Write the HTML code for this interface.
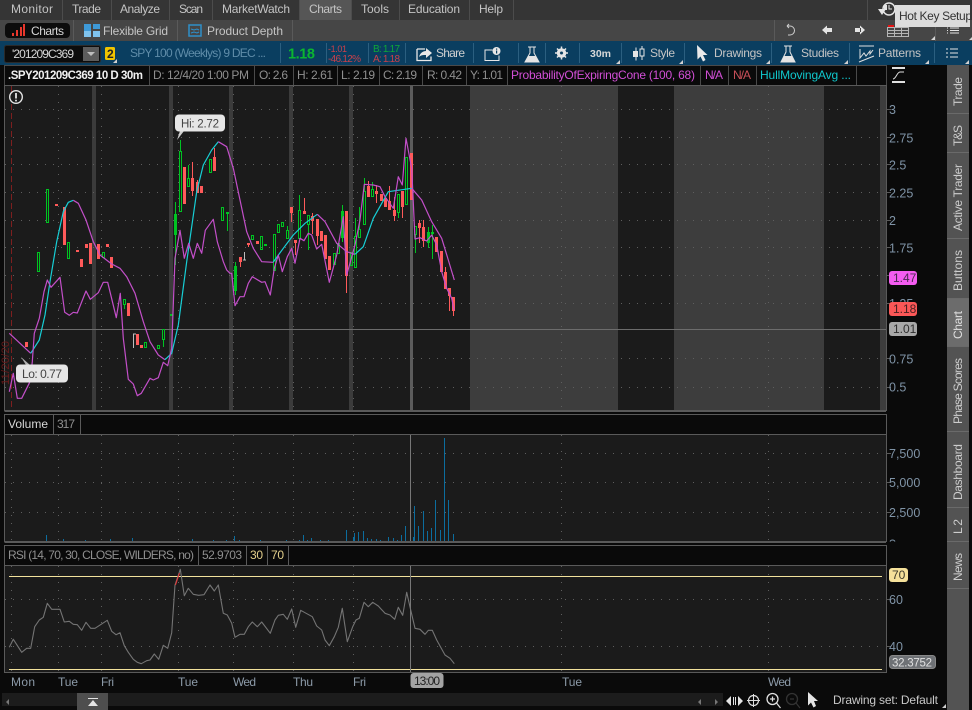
<!DOCTYPE html>
<html><head><meta charset="utf-8"><style>
html,body{margin:0;padding:0;background:#0a0a0a;width:972px;height:710px;overflow:hidden}
svg{display:block}
text{font-family:"Liberation Sans",sans-serif;font-size:12px;fill:#c4c4c4}
.g rect{fill:none;stroke:#00c322;stroke-width:1}
.g path{stroke:#00c322;stroke-width:1;fill:none}
.r rect{fill:#ff5a5a}
.r path{stroke:#ff5a5a;stroke-width:1;fill:none}
.hd{stroke:#5a5a5a;stroke-width:1;fill:none}
.dot{stroke:#5e5e5e;stroke-width:1;stroke-dasharray:1 7;fill:none}
.dk{stroke:#2b5f80;stroke-width:1}
.ax{fill:#7f93a6;font-size:12.500px}
</style></head><body>
<svg width="972" height="710" viewBox="0 0 972 710" xmlns="http://www.w3.org/2000/svg">
<rect width="972" height="710" fill="#0a0a0a"/>
<!-- menu -->
<rect width="972" height="20" fill="#353535"/>
<rect x="300" width="51" height="20" fill="#565656"/>
<path d="M62.500 0v20M111.500 0v20M169.500 0v20M212.500 0v20M299.500 0v20M351.500 0v20M399.500 0v20M469.500 0v20M513.500 0v20M867.500 0v20" stroke="#4c4c4c"/>
<text x="11" y="13" textLength="42">Monitor</text>
<text x="72" y="13" textLength="29">Trade</text>
<text x="120" y="13" textLength="40">Analyze</text>
<text x="179" y="13" textLength="24">Scan</text>
<text x="222" y="13" textLength="68">MarketWatch</text>
<text x="309" y="13" textLength="33">Charts</text>
<text x="361" y="13" textLength="28">Tools</text>
<text x="408" y="13" textLength="52">Education</text>
<text x="479" y="13" textLength="24">Help</text>
<!-- row2 -->
<rect y="20" width="972" height="21" fill="#464646"/>
<rect x="5" y="23" width="65" height="15" rx="4" fill="#0c0c0c"/>
<path d="M13 36v-3M17 36v-6M21 36v-9M24 36v-12" stroke="#e8372c" stroke-width="2"/>
<text x="31" y="35" textLength="33" style="fill:#d8d8d8">Charts</text>
<path d="M73.500 20v21M177.500 20v21M292.500 20v21M774.500 20v21M935.500 20v21" stroke="#5a5a5a"/>
<rect x="84" y="24" width="7" height="11" fill="#3e9ad8"/><rect x="93" y="24" width="7" height="5" fill="#3e9ad8"/><rect x="84" y="31" width="7" height="6" fill="#7fc3ee"/><rect x="93" y="31" width="7" height="6" fill="#7fc3ee"/>
<text x="103" y="35" textLength="65">Flexible Grid</text>
<rect x="189" y="25" width="12" height="11" fill="none" stroke="#2f8fc9" stroke-width="1.500"/><path d="M191 29l3 1 3-1 2 1M191 33l3-1 3 1 2-1" stroke="#2f8fc9" fill="none"/>
<text x="207" y="35" textLength="76">Product Depth</text>
<path d="M787 26h3a4.500 4.500 0 1 1 0 9h-2M787 26l2-2M787 26l2 2" stroke="#cfcfcf" fill="none"/>
<path d="M826 28h6v4h-6zM827 25.500v9l-5-4.500z" fill="#e4e4e4"/>
<path d="M855 28h6v4h-6zM860 25.500v9l5-4.500z" fill="#e4e4e4"/>
<path d="M887.500 27.500h21v9h-21zM887.500 30.500h21M887.500 33.500h21M894.500 27.500v9M901.500 27.500v9" stroke="#b5b5b5" fill="none"/>
<rect x="888" y="25" width="6" height="2" fill="#e81313"/>
<path d="M948 28h-1M948 30.500h-1M948 33h-1M950 28h9M950 30.500h9M950 33h9" stroke="#e4e4e4"/>
<path d="M931 40l4-4v4zM969 40l3-3v3z" fill="#d5d5d5"/>
<!-- row3 -->
<rect y="41" width="972" height="24" fill="#0a3e60"/>
<rect x="4.500" y="45.500" width="96" height="17" rx="2" fill="#0c0c0c" stroke="#2a2a2a"/>
<text x="12" y="58" textLength="62" style="fill:#d6d6d6">'201209C369</text>
<rect x="83" y="47" width="16" height="14" fill="#5c5c5c"/><path d="M87 52h8l-4 4z" fill="#bdbdbd"/>
<rect x="105" y="47" width="10" height="13" rx="1.500" fill="#f0c400"/><text x="107" y="58" style="font-size:12px;font-weight:bold;fill:#222">2</text>
<path d="M113 63l4-4v4z" fill="#d0d0d0"/>
<text x="130" y="57" textLength="136" style="fill:#5f8ca8">SPY 100 (Weeklys) 9 DEC ...</text>
<path d="M280.500 43v20M326.500 43v20M368.500 43v20M405.500 43v20M473.500 43v20M518.500 43v20M545.500 43v20M579.500 43v20M621.500 43v20M684.500 43v20M771.500 43v20M849.500 43v20M934.500 43v20" class="dk"/>
<text x="288" y="58.500" textLength="27" style="font-size:14.500px;font-weight:bold;fill:#0bb530">1.18</text>
<text x="328" y="52" textLength="19" style="font-size:9px;fill:#c9414b">-1.01</text>
<text x="328" y="62" textLength="33" style="font-size:10px;fill:#c9414b">-46.12%</text>
<text x="373" y="52" textLength="27" style="font-size:10px;fill:#0fa838">B: 1.17</text>
<text x="373" y="62" textLength="27" style="font-size:10px;fill:#c9414b">A: 1.18</text>
<path d="M417 49v11.500h14v-4M425 49h-8" stroke="#e8e8e8" fill="none" stroke-width="1.300"/>
<path d="M419 57c1-4 4-6 7-6v-3l6 5-6 5v-3c-3 0-5 0-7 2z" fill="#e8e8e8"/>
<text x="436" y="57" textLength="29" style="fill:#d0d0d0">Share</text>
<path d="M484.500 50h8M485 50.500v10h14v-5" stroke="#e6e6e6" fill="none"/><circle cx="496.500" cy="51" r="4" fill="#e6e6e6"/><rect x="496" y="48.500" width="1.200" height="1.200" fill="#0a3e60"/><rect x="496" y="50.500" width="1.200" height="3" fill="#0a3e60"/>
<path d="M528 47h8M530 47v6l-5 9h14l-5-9v-6" stroke="#e4e4e4" fill="none"/><path d="M528 56h8l3 6h-14z" fill="#e4e4e4"/>
<circle cx="561.500" cy="53" r="3.500" fill="none" stroke="#e6e6e6" stroke-width="2.500"/><path d="M561.500 46.500v13M555 53h13M557 48.500l9 9M566 48.500l-9 9" stroke="#e6e6e6" stroke-width="1.500"/><circle cx="561.500" cy="53" r="1.500" fill="#0a3e60"/>
<text x="590" y="57" textLength="21" style="font-weight:bold;font-size:10.500px;fill:#d8d8d8">30m</text>
<path d="M636 47.500v13" stroke="#e6e6e6"/><rect x="633" y="51" width="5" height="6" fill="#e6e6e6"/><path d="M642 46v14" stroke="#e6e6e6"/><rect x="640" y="49" width="4" height="7" fill="#0a3e60" stroke="#e6e6e6"/>
<text x="650" y="57" textLength="25">Style</text>
<path d="M697 45l10.500 10h-4.500l2.500 5-2.500 1.500-2.500-5-3 3z" fill="#eaeaea"/>
<text x="714" y="57" textLength="48">Drawings</text>
<path d="M784 46h8M786 46v6l-5 10h14l-5-10v-6" stroke="#e4e4e4" fill="none"/><path d="M784 56h8l3 6h-14z" fill="#e4e4e4"/>
<text x="801" y="57" textLength="38">Studies</text>
<path d="M859 46h15M859 62l15-6M860 49v9l4-5 2 3 4-5v3l3-4" stroke="#e0e0e0" fill="none"/>
<text x="878" y="57" textLength="43">Patterns</text>
<path d="M946 49h2M946 53h2M946 57h2M950 49h8M950 53h8M950 57h8" stroke="#e4e4e4"/>
<path d="M616 64l4-4v4zM679 64l4-4v4zM766 64l4-4v4zM844 64l4-4v4zM925 64l4-4v4zM965 64l4-4v4z" fill="#d0d0d0"/>
<!-- row4 -->
<rect y="65" width="972" height="20" fill="#0a0a0a"/>
<path d="M4.500 65.500H886.500M149.500 65v20M254.500 65v20M293.500 65v20M337.500 65v20M379.500 65v20M422.500 65v20M466.500 65v20M507.500 65v20M700.500 65v20M728.500 65v20M756.500 65v20M856.500 65v20M886.500 65v20M4.500 65v20" stroke="#4a4a4a"/>
<text x="8" y="79" textLength="135" style="font-weight:bold;fill:#f0f0f0;font-size:11.500px">.SPY201209C369 10 D 30m</text>
<text x="153" y="79" textLength="96" style="fill:#8f8f8f">D: 12/4/20 1:00 PM</text>
<text x="259" y="79" textLength="29" style="fill:#8f8f8f">O: 2.6</text>
<text x="297" y="79" textLength="36" style="fill:#8f8f8f">H: 2.61</text>
<text x="341" y="79" textLength="34" style="fill:#8f8f8f">L: 2.19</text>
<text x="383" y="79" textLength="34" style="fill:#8f8f8f">C: 2.19</text>
<text x="427" y="79" textLength="35" style="fill:#8f8f8f">R: 0.42</text>
<text x="470" y="79" textLength="33" style="fill:#8f8f8f">Y: 1.01</text>
<text x="511" y="79" textLength="184" style="fill:#d24fd6">ProbabilityOfExpiringCone (100, 68)</text>
<text x="705" y="79" textLength="18" style="fill:#d24fd6">N/A</text>
<text x="733" y="79" textLength="18" style="fill:#c9505a">N/A</text>
<text x="760" y="79" textLength="91" style="fill:#10c7cc">HullMovingAvg ...</text>
<path d="M892 68h13M892 82h13" stroke="#e0e0e0" stroke-width="2"/><path d="M893 79c3 0 4-7 7-7h4" stroke="#e0e0e0" fill="none"/>
<!-- main panel -->
<rect x="4.500" y="85.500" width="882" height="325" fill="#1b1b1b" stroke="#5a5a5a"/>
<rect x="470" y="86" width="148" height="324" fill="#3d3d3d"/>
<rect x="674" y="86" width="150" height="324" fill="#3d3d3d"/>
<rect x="880" y="86" width="6" height="324" fill="#3d3d3d"/>
<g fill="#3b3b3b"><rect x="92" y="86" width="4" height="324"/><rect x="169" y="86" width="4" height="324"/><rect x="229" y="86" width="4" height="324"/><rect x="289" y="86" width="4" height="324"/><rect x="349" y="86" width="4" height="324"/></g>
<rect x="410" y="86" width="3" height="324" fill="#5c5c5c"/>
<path class="dot" d="M5 109.500H880M5 137.500H880M5 164.500H880M5 192.500H880M5 220.500H880M5 247.500H880M5 275.500H880M5 303.500H880M5 358.500H880M5 387.500H880"/>
<path class="dot" d="M58.500 86V410M101.500 86V410M178.500 86V410M233.500 86V410M293.500 86V410M353.500 86V410M561.500 86V410M768.500 86V410"/>
<path d="M11.500 86V410" stroke="#7d1f1f" stroke-dasharray="6 3"/>
<text x="9" y="385" transform="rotate(-90 9 385)" style="font-size:11px;fill:#6b1a1a" textLength="44">11/20/20</text>
<path d="M5 329.500H886" stroke="#6c6c6c"/>
<!-- candles -->
<g shape-rendering="crispEdges">
<g class="g">
<rect x="46.500" y="189.500" width="2" height="33"/><rect x="37.500" y="252.500" width="2" height="19"/><rect x="67.500" y="242.500" width="2" height="16"/><rect x="102.500" y="252.500" width="2" height="5"/><rect x="123.500" y="299.500" width="2" height="5"/><path d="M124.500 305v4"/>
<rect x="144.500" y="342.500" width="2" height="5"/><rect x="157.500" y="345.500" width="2" height="3"/><rect x="162.500" y="329.500" width="2" height="10"/><path d="M163.500 340v7"/>
<rect x="170" y="314" width="3" height="2" style="fill:#00c322;stroke:none"/>
<rect x="174.500" y="214.500" width="2" height="20"/><path d="M175.500 202v63"/>
<rect x="179.500" y="151.500" width="2" height="60"/><path d="M180.500 140v11"/>
<rect x="187.500" y="178.500" width="2" height="8"/><path d="M188.500 165v13"/>
<rect x="209.500" y="159.500" width="2" height="13"/><rect x="221.500" y="207.500" width="2" height="13"/>
<rect x="226" y="212" width="3" height="2" style="fill:#00c322;stroke:none"/><path d="M227.500 214v17"/>
<rect x="234.500" y="266.500" width="2" height="24"/><path d="M235.500 262v33"/>
<rect x="251.500" y="235.500" width="2" height="4"/><rect x="260.500" y="236.500" width="2" height="13"/>
<rect x="264" y="244" width="3" height="2" style="fill:#00c322;stroke:none"/>
<rect x="273.500" y="234.500" width="2" height="36"/><rect x="277.500" y="224.500" width="2" height="8"/><rect x="281.500" y="222.500" width="2" height="4"/>
<rect x="286.500" y="230.500" width="2" height="8"/><path d="M287.500 226v4"/>
<rect x="298.500" y="210.500" width="2" height="28"/><path d="M299.500 195v15"/>
<rect x="307.500" y="215.500" width="2" height="9"/><path d="M308.500 224v26"/>
<rect x="333.500" y="253.500" width="2" height="11"/><rect x="337.500" y="243.500" width="2" height="10"/>
<rect x="341.500" y="211.500" width="2" height="26"/><path d="M342.500 205v37"/>
<rect x="350.500" y="252.500" width="2" height="13"/><rect x="354.500" y="236.500" width="2" height="31"/><path d="M355.500 218v18"/>
<rect x="358.500" y="229.500" width="2" height="8"/><path d="M359.500 207v22"/>
<rect x="363.500" y="191.500" width="2" height="33"/><path d="M364.500 178v13"/>
<rect x="371.500" y="189.500" width="2" height="7"/><path d="M372.500 182v7"/>
<rect x="397.500" y="194.500" width="2" height="18"/><path d="M398.500 212v6"/>
<rect x="405.500" y="157.500" width="2" height="47"/>
<rect x="414.500" y="226.500" width="2" height="8"/><path d="M415.500 234v19"/>
<rect x="427.500" y="232.500" width="2" height="10"/><path d="M428.500 227v21"/>
<rect x="431" y="232" width="3" height="2" style="fill:#00c322;stroke:none"/><path d="M432.500 225v34"/>
</g>
<g class="r">
<rect x="25" y="342" width="3" height="5"/><rect x="55" y="204" width="3" height="2"/><rect x="63" y="207" width="3" height="38"/><rect x="76" y="250" width="3" height="2"/><rect x="80" y="259" width="3" height="8"/><rect x="85" y="244" width="3" height="4"/><rect x="89" y="243" width="3" height="21"/><rect x="97" y="244" width="3" height="15"/><rect x="106" y="244" width="3" height="3"/><rect x="110" y="257" width="3" height="11"/><rect x="127" y="303" width="3" height="13"/><rect x="136" y="334" width="3" height="11"/><rect x="140" y="345" width="3" height="3"/>
<rect x="183" y="167" width="3" height="37"/><rect x="191" y="178" width="3" height="13"/><path d="M192.500 162v34"/><rect x="196" y="182" width="3" height="11"/><path d="M197.500 180v3"/><rect x="200" y="186" width="3" height="7"/><rect x="213" y="157" width="3" height="14"/><path d="M214.500 148v9"/>
<rect x="239" y="257" width="3" height="5"/><path d="M240.500 262v5"/><rect x="247" y="243" width="3" height="2"/><path d="M248.500 245v2"/><rect x="256" y="241" width="3" height="3"/>
<rect x="290" y="207" width="3" height="6"/><path d="M291.500 213v9"/><rect x="294" y="240" width="3" height="3"/><path d="M295.500 243v12"/><rect x="303" y="211" width="3" height="3"/><path d="M304.500 198v13"/><rect x="311" y="216" width="3" height="5"/><path d="M312.500 213v21"/><rect x="316" y="219" width="3" height="17"/><path d="M317.500 236v9"/><rect x="320" y="231" width="3" height="10"/><rect x="324" y="235" width="3" height="24"/><rect x="328" y="256" width="3" height="14"/>
<rect x="345" y="211" width="3" height="65"/><path d="M346.500 276v17"/><rect x="367" y="186" width="3" height="11"/><path d="M368.500 181v5"/><rect x="375" y="191" width="3" height="3"/><path d="M376.500 185v18"/><rect x="380" y="194" width="3" height="7"/><rect x="384" y="198" width="3" height="9"/><rect x="388" y="201" width="3" height="9"/><path d="M389.500 186v15"/><rect x="393" y="210" width="3" height="6"/><path d="M394.500 197v24"/><rect x="401" y="191" width="3" height="16"/><path d="M402.500 207v11"/><rect x="410" y="153" width="3" height="47"/>
<rect x="418" y="223" width="3" height="5"/><path d="M419.500 220v23"/><rect x="422" y="227" width="3" height="14"/><path d="M423.500 220v27"/><rect x="435" y="237" width="3" height="15"/><rect x="440" y="251" width="3" height="21"/><rect x="444" y="272" width="3" height="17"/><path d="M445.500 267v5"/><rect x="448" y="288" width="3" height="8"/><path d="M449.500 296v15"/><rect x="452" y="297" width="3" height="14"/><path d="M453.500 311v5"/>
</g>
<path d="M133.500 334v14M244.500 252v8" stroke="#bdbdbd"/>
<path d="M133 334h3M243 260h3" stroke="#bdbdbd"/>
</g>
<!-- lines -->
<g fill="none" stroke-width="1.200" stroke-linejoin="round">
<path stroke="#c34fc9" d="M9.300 333.300L20 343.300L30.700 353.300"/>
<path stroke="#17cfd6" d="M30.700 353.300L39.300 340L45 315L50 281.700L56.700 241.700L63.300 211.700L68.300 202.300L73.300 200.300"/>
<path stroke="#c34fc9" d="M73.300 200.300L78.300 203.300L86 220L93.300 241.700L100 255L111.700 264L120 268.300L126.700 276.700L135 293.300L143.300 321.700L150 341.700L158.300 355L165 359.700"/>
<path stroke="#17cfd6" d="M165 359.700L171.700 353.300L178.300 325L186.700 261.700L196.700 191.700L203.300 165L211.700 150L218.300 141.700"/>
<path stroke="#c34fc9" d="M218.300 141.700L226.700 146.700L233.300 168.300L240 200L246.700 231.700L253.300 248.300L261.700 261.700L273.300 262.300"/>
<path stroke="#17cfd6" d="M273.300 262L283.300 248.300L293.300 235L305 223.300L317.300 214.300"/>
<path stroke="#c34fc9" d="M317.300 214.300L325 221.700L336.700 243.300L346.700 251.700L355 254.300"/>
<path stroke="#17cfd6" d="M355 254.300L363.300 246.700L373.300 218.300L388.300 191.700L411.700 188.300"/>
<path stroke="#c34fc9" d="M411.700 188.300L421.700 200L431.700 221.700L441.700 238.300L448.300 260L454.300 280"/>
<path stroke="#c34fc9" d="M9.300 391.700L13.300 373.300L17.300 398.300L21.700 398.300L30 381.700L32.300 361.700L34.300 333.300L39.300 318.300L44 291.700L47.300 280L51 287.300L60 277.300L64.700 312.300L69.300 315.300L73.300 312.300L77.300 313L86 291L90.300 299.300L98.300 292.700L103.300 282.300L107.700 282.300L116.300 317.700L120.300 293.300L123.300 338.300L128.300 379.300L133.300 384L137.300 395.700L141.300 393.300L150 378.300L153.300 380L158.300 377.700L163.300 362.300L167.700 365.700L171.700 348.300L175 258.300L180 230.300L184.300 258.300L188.700 243.300L193.300 258.300L197.300 243.300L201.700 253.300L205.300 230.300L213.300 219.300L217.300 241.700L223.300 261.700L226.700 270L230 273.300L231.700 273.300L235 305.700L240 296.700L244 296.700L248.300 283.300L252.300 276.700L261.700 282.300L265 281.700L270.300 295L274.300 268.300L278.300 255L282.300 271.700L287.300 256.700L291.700 248.300L295 263.300L300 238.300L304 240.700L308.300 233.300L311.700 235L316.700 249L321.700 244.300L329.300 282.300L336.700 255L343.300 216.700L346.700 275L355 245L360 220L364.300 184.300L373.300 185L380 186.700L385 196.700L393.300 208.300L398.300 176.700L402.300 185L406 138.300L411.700 168.300L415 239L420 237.700L426.700 241L431.700 235L436.700 245L441.700 271.700L446.700 288.300L451.700 298.300L454 310"/>
</g>
<!-- bubbles -->
<path d="M180 131l-3 9 7-9z" fill="#cfcfcf"/>
<rect x="175" y="114.500" width="50" height="17" rx="4" fill="#e6e6e6"/>
<text x="181" y="127.500" textLength="38" style="fill:#444;font-size:11.500px">Hi: 2.72</text>
<path d="M21 357l5 8h4z" fill="#b0b0b0"/>
<rect x="16" y="364.500" width="52" height="18" rx="4" fill="#e6e6e6"/>
<text x="22" y="378" textLength="40" style="fill:#444">Lo: 0.77</text>
<circle cx="16" cy="97" r="6.300" fill="#1b1b1b" stroke="#e4e4e4" stroke-width="1.400"/><path d="M16 93v5.500M16 99.800v1.600" stroke="#e4e4e4" stroke-width="1.800"/>
<!-- price axis -->
<path d="M886 109.500h5M886 137.500h5M886 164.500h5M886 192.500h5M886 220.500h5M886 247.500h5M886 275.500h5M886 303.500h5M886 358.500h5M886 387.500h5" stroke="#5a5a5a"/>
<text class="ax" x="889" y="114">3</text><text class="ax" x="889" y="142.500">2.75</text><text class="ax" x="889" y="169.500">2.5</text><text class="ax" x="889" y="197.500">2.25</text><text class="ax" x="889" y="225">2</text><text class="ax" x="889" y="252.500">1.75</text><text class="ax" x="889" y="308">1.25</text><text class="ax" x="889" y="363.500">0.75</text><text class="ax" x="889" y="391.500">0.5</text>
<rect x="889" y="271" width="28" height="14" rx="3" fill="#f45cf0"/><text x="893" y="282" style="font-size:12px;fill:#4a2a50">1.47</text>
<rect x="889" y="302" width="28" height="14" rx="3" fill="#fb5757"/><text x="893" y="313" style="font-size:12px;fill:#4a2222">1.18</text>
<rect x="889" y="322" width="28" height="14" rx="3" fill="#a8a8a8"/><text x="893" y="333" style="font-size:12px;fill:#2e2e2e">1.01</text>
<!-- volume -->
<path class="hd" d="M4.500 411.500H886M4.500 414.500H886.500V434.500H4.500ZM53.500 414v20M80.500 414v20"/>
<text x="8" y="428" textLength="40" style="fill:#d8d8d8">Volume</text>
<text x="57" y="428" textLength="18" style="fill:#8f8f8f">317</text>
<rect x="4.500" y="434.500" width="882" height="107" fill="#1b1b1b" stroke="#5a5a5a"/>
<path class="dot" d="M5 453.500H880M5 482.500H880M5 512.500H880"/>
<path class="dot" d="M11.500 435V541M58.500 435V541M101.500 435V541M178.500 435V541M233.500 435V541M293.500 435V541M353.500 435V541M561.500 435V541M768.500 435V541"/>
<path stroke="#0c6d9e" fill="none" shape-rendering="crispEdges" d="M46.500 535v6M63.500 539v2M85.500 540v1M110.500 539v2M132.500 538v3M192.500 539v2M213.500 540v1M226.500 540v1M234.500 536v5M239.500 540v1M260.500 540v1M286.500 540v1M299.500 540v1M303.500 535v6M307.500 540v1M311.500 538v3M320.500 540v1M328.500 540v1M346.500 530v11M353.500 537v4M354.500 533v8M358.500 532v9M363.500 531v10M367.500 538v3M371.500 539v2M376.500 539v2M380.500 540v1M388.500 537v4M393.500 538v3M397.500 540v1M401.500 535v6M405.500 526v15M413.500 537v4M414.500 506v35M418.500 526v15M423.500 511v30M427.500 531v10M431.500 528v13M435.500 500v41M440.500 530v11M444.500 438v103M448.500 500v41M453.500 534v7"/>
<path d="M410.500 435V541" stroke="#777"/>
<path d="M886 453.500h5M886 482.500h5M886 512.500h5" stroke="#5a5a5a"/>
<text class="ax" x="889" y="458">7,500</text><text class="ax" x="889" y="487">5,000</text><text class="ax" x="889" y="517">2,500</text>
<path d="M890 541.500c1-2 4-2 5 0" stroke="#7f93a6" fill="none"/>
<!-- rsi -->
<path class="hd" d="M4.500 542.500H886M4.500 545.500H886.500V565.500H4.500ZM198.500 545v20M246.500 545v20M267.500 545v20M288.500 545v20"/>
<text x="8" y="559" textLength="186" style="fill:#8f8f8f">RSI (14, 70, 30, CLOSE, WILDERS, no)</text>
<text x="202" y="559" textLength="40" style="fill:#8f8f8f">52.9703</text>
<text x="250" y="559" textLength="13" style="fill:#e3cf8b">30</text>
<text x="271" y="559" textLength="13" style="fill:#e3cf8b">70</text>
<rect x="4.500" y="565.500" width="882" height="107" fill="#1b1b1b" stroke="#5a5a5a"/>
<path class="dot" d="M5 599.500H880M5 646.500H880"/>
<path class="dot" d="M11.500 566V672M58.500 566V672M101.500 566V672M178.500 566V672M233.500 566V672M293.500 566V672M353.500 566V672M561.500 566V672M768.500 566V672"/>
<path d="M9 576.500H882M9 669.500H882" stroke="#f2e29c"/>
<path fill="none" stroke="#747474" stroke-width="1.100" stroke-linejoin="round" d="M9.300 647.300L13.300 639.300L21.700 652.300L26.700 648.300L30.700 648.300L34.700 626.700L39.300 620L43.300 617.300L47.300 603.300L51.700 609.300L60 609.300L64.300 622L69.300 621.300L73.300 624.300L77.300 624.700L81.700 630.300L86 622.300L90.700 628.300L95 628.300L107.300 620.300L111.700 631.300L116 634.700L120 632.700L124.300 645.700L128.300 652.300L133.300 659.300L137.300 662.300L141.300 663.700L146.700 660.700L150 660L154.300 654L158.700 659.300L163.300 645.300L167.700 648.300L171.700 632.700L175 585L180.300 569.300L184.300 595.700L188.300 588.300L193.300 594.300L198.700 595.300L204 594.700L210 585L214.300 591L218.300 585L223.300 613.300L227.300 615L231.700 623.300L235 637.300L240 634.300L244.300 634.300L248.300 626.700L252.300 622L257.300 626.700L261.700 622L270.300 633.300L275 620L278.300 615.300L283.300 614.300L287.300 619.300L291.700 609L295.700 627.300L300.700 610.300L312.300 616.700L316.700 626L321.700 630L325 640L329.300 645.700L334.300 636.700L338.300 627.300L342.300 608.300L347.300 641.700L352.700 626.700L356 620L359.300 618.300L364 602.300L368.300 606.700L372.700 602.300L378.300 606L385 613.300L390 615L394.700 619.300L398.300 607.300L402.700 615.300L406.700 592.300L410.700 610L415 628.300L420 629.300L425 634.300L428.300 630.300L432.300 630.300L436.700 640L445 655L450 658.300L454.300 663.700"/>
<path d="M175.500 585l4-12" stroke="#e33" fill="none"/>
<path d="M410.500 566V672" stroke="#777"/>
<path d="M886 599.500h5M886 646.500h5" stroke="#5a5a5a"/>
<rect x="889" y="568" width="19" height="14" rx="3" fill="#f5e19a"/><text x="892" y="579" style="font-size:12px;fill:#3d3a2a">70</text>
<text class="ax" x="889" y="604">60</text><text class="ax" x="889" y="651">40</text>
<rect x="889.500" y="655.500" width="46" height="13" rx="3" fill="#6e7175" stroke="#888"/><text x="892" y="666.500" textLength="40" style="font-size:11.500px;fill:#e0e0e0">32.3752</text>
<!-- time axis -->
<text x="11" y="686" textLength="24" style="fill:#8c9aa8">Mon</text><text x="58" y="686" textLength="20" style="fill:#8c9aa8">Tue</text><text x="101" y="686" textLength="13" style="fill:#8c9aa8">Fri</text><text x="178" y="686" textLength="20" style="fill:#8c9aa8">Tue</text><text x="233" y="686" textLength="23" style="fill:#8c9aa8">Wed</text><text x="293" y="686" textLength="20" style="fill:#8c9aa8">Thu</text><text x="353" y="686" textLength="13" style="fill:#8c9aa8">Fri</text><text x="562" y="686" textLength="20" style="fill:#8c9aa8">Tue</text><text x="768" y="686" textLength="23" style="fill:#8c9aa8">Wed</text>
<rect x="410.500" y="673" width="33" height="15" rx="3" fill="#a3a3a3"/><text x="414" y="685" textLength="26" style="fill:#222;font-size:12px">13:00</text>
<!-- scroll -->
<rect x="2" y="693" width="721" height="13" fill="#1c1c1c"/>
<rect x="77" y="693" width="31" height="17" fill="#4e4e4e"/>
<path d="M88 698h10v1H88zM93 700l5 6H88z" fill="#e4e4e4"/>
<path d="M9 699v6l-3-3zM701 699v6l-3-3zM715 699v6l3-3z" fill="#777"/>
<path d="M731 696v10l-5-5zM738 696v10l5-5zM733 697h1v8h-1zM735 697h1v8h-1z" fill="#e4e4e4"/>
<circle cx="753.500" cy="700.500" r="5" fill="none" stroke="#dedede" stroke-width="1.200"/><path d="M753.500 694v13M747 700.500h13" stroke="#dedede"/>
<circle cx="772.500" cy="699" r="5.500" fill="none" stroke="#e0e0e0" stroke-width="1.300"/><path d="M776.500 703l4 5M770 699h5M772.500 696.500v5" stroke="#e0e0e0" stroke-width="1.200"/>
<circle cx="792" cy="699" r="5.500" fill="none" stroke="#333" stroke-width="1.300"/><path d="M796 703l4 5M790 699h4" stroke="#333" stroke-width="1.200"/>
<path d="M808 692l10 9h-4l2 5-2.500 1.500-2.500-5-3 3z" fill="#e4e4e4"/>
<text x="833" y="704" textLength="105" style="fill:#c8c8c8">Drawing set: Default</text>
<path d="M942 708l4-4v4z" fill="#cfcfcf"/>
<!-- sidebar -->
<rect x="947" y="65" width="22" height="645" fill="#535353"/>
<rect x="947" y="298" width="22" height="48" fill="#6c6c6c"/>
<path d="M947 113.500h22M947 152.500h22M947 238.500h22M947 298.500h22M947 346.500h22M947 431.500h22M947 507.500h22M947 541.500h22M947 588.500h22" stroke="#6a6a6a"/>
<text transform="translate(962,106) rotate(-90)" textLength="29" style="fill:#cdcdcd">Trade</text>
<text transform="translate(962,146) rotate(-90)" textLength="21" style="fill:#cdcdcd">T&amp;S</text>
<text transform="translate(962,231) rotate(-90)" textLength="67" style="fill:#cdcdcd">Active Trader</text>
<text transform="translate(962,291) rotate(-90)" textLength="41" style="fill:#cdcdcd">Buttons</text>
<text transform="translate(962,339) rotate(-90)" textLength="28" style="fill:#e0e0e0">Chart</text>
<text transform="translate(962,424) rotate(-90)" textLength="66" style="fill:#cdcdcd">Phase Scores</text>
<text transform="translate(962,500) rotate(-90)" textLength="56" style="fill:#cdcdcd">Dashboard</text>
<text transform="translate(962,534) rotate(-90)" textLength="15" style="fill:#cdcdcd">L 2</text>
<text transform="translate(962,581) rotate(-90)" textLength="28" style="fill:#cdcdcd">News</text>
<!-- clock + tooltip -->
<circle cx="889" cy="9" r="6" fill="none" stroke="#e4e4e4" stroke-width="1.500"/><path d="M889 5v4h3" stroke="#e4e4e4" fill="none"/><path d="M878 9h8l-4 6z M884 5h3v5h-3z" fill="#e4e4e4"/>
<rect x="895" y="5" width="75" height="22" fill="#dcdcdc"/>
<svg x="895" y="5" width="75" height="22"><text x="4" y="15" textLength="73" style="fill:#333">Hot Key Setup</text></svg>
</svg>
</body></html>
